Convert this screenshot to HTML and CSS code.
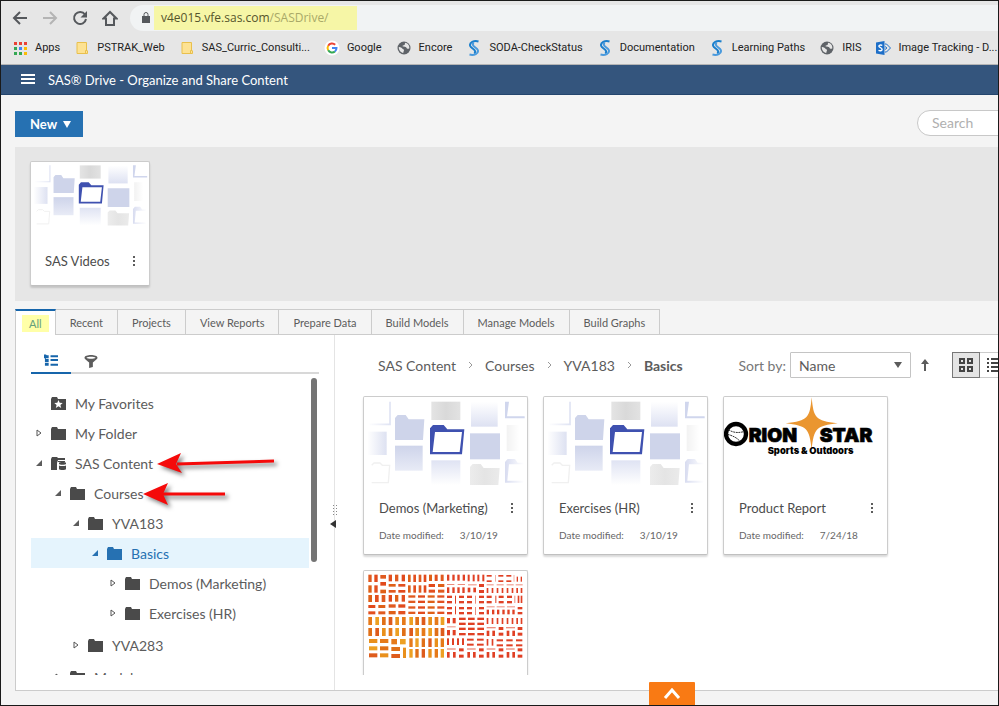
FILE: index.html
```html
<!DOCTYPE html>
<html lang="en">

<head>
    <meta charset="UTF-8">
    <meta name="viewport" content="width=device-width, initial-scale=1.0">
    <title>SAS Drive</title>
    <link rel="stylesheet" href="styles.css">
</head>

<body>
    <!-- Shared icons -->
    <svg class="defs" aria-hidden="true">
        <defs>
            <linearGradient id="fade-down" x1="0" y1="0" x2="0" y2="1">
                <stop offset="0" stop-color="#dfe3f3"/><stop offset="1" stop-color="#fff"/>
            </linearGradient>
            <linearGradient id="fade-up" x1="0" y1="0" x2="0" y2="1">
                <stop offset="0" stop-color="#fff"/><stop offset="1" stop-color="#dde1f2"/>
            </linearGradient>
            <linearGradient id="fade-soft" x1="0" y1="0" x2="0" y2="1">
                <stop offset="0" stop-color="#ced4ea"/><stop offset="1" stop-color="#e8ebf6"/>
            </linearGradient>
            <linearGradient id="fade-left">
                <stop offset="0" stop-color="#fff"/><stop offset="1" stop-color="#d5daee"/>
            </linearGradient>
            <linearGradient id="fade-grey">
                <stop offset="0" stop-color="#e4e4e4"/><stop offset=".5" stop-color="#d9d9d9"/><stop offset="1" stop-color="#e2e2e2"/>
            </linearGradient>
            <linearGradient id="fade-grey-right">
                <stop offset="0" stop-color="#f2f2f2"/><stop offset="1" stop-color="#fff"/>
            </linearGradient>
            <linearGradient id="line-left" gradientUnits="userSpaceOnUse" x1="55" y1="0" x2="120" y2="0">
                <stop offset="0" stop-color="#fff"/><stop offset="1" stop-color="#dfe3f3"/>
            </linearGradient>
            <linearGradient id="line-right" gradientUnits="userSpaceOnUse" x1="465" y1="0" x2="522" y2="0">
                <stop offset="0" stop-color="#d8dcf0"/><stop offset="1" stop-color="#fff"/>
            </linearGradient>
        </defs>
        <symbol id="folder" viewBox="0 0 15 13">
            <path d="M0 2 1 0h5l1 2h8v11H0z"/>
        </symbol>
        <symbol id="sas" viewBox="0 0 16 16">
            <path fill="none" stroke="#1b7fcc" stroke-width="2" d="M12.500 1.500C8 .2 3 2.500 4.200 6c.8 2.200 4.600 3 5 5.400.1.800-.4 1.400-1.200 1.600"/>
            <path fill="none" stroke="#4a9add" stroke-width="2" d="M3.500 14.500c4.500 1.300 9.500-1 8.300-4.500C11 7.800 7.200 7 6.800 4.600c-.1-.8.400-1.400 1.200-1.600"/>
        </symbol>
        <symbol id="globe" viewBox="0 0 16 16">
            <circle cx="8" cy="8" r="6.500" fill="#5f6368"/>
            <path fill="#e6e6e6" d="M2.800 7c1.200-.2 3 .6 3.500 1.600.3.900 1.700.6 1.700 1.700 0 .9-.8 1.300-.7 2.700C4.700 12.600 2.600 10 2.800 7zM9 2.800c-.2 1 .2 1.500-.6 2.100-.9.500-2 .2-1.900 1.200.1 1 2.200.6 3.200.8 1.100.3.800 1.600 1.800 1.900.8.200 1.300-.5 1.800-.3C13.700 5.300 11.500 3 9 2.800z"/>
        </symbol>
        <symbol id="bookmark-folder" viewBox="0 0 16 16">
            <path fill="#fde293" stroke="#e9c04c" d="M3 2.500h9.500v7.500l1 1v2.500H3z"/>
            <path fill="none" stroke="#e9c04c" d="M11.500 13v-2.500h1.500"/>
        </symbol>
        <symbol id="closed" viewBox="0 0 6 8">
            <path fill="#fff" stroke="#555" d="M1 1v6l4-3z"/>
        </symbol>
        <symbol id="open" viewBox="0 0 6 6">
            <path d="M0 6h6V0z"/>
        </symbol>
        <symbol id="dots" viewBox="0 0 4 12">
            <path d="M1 1h2v2H1zM1 5h2v2H1zM1 9h2v2H1z"/>
        </symbol>
        <symbol id="folders" viewBox="42 36 489 270">
            <path fill="none" stroke="url(#line-left)" stroke-width="5" d="M120 50v68H58"/>
            <path fill="url(#fade-left)" opacity=".8" d="M52 140h58v70H52z"/>
            <path fill="none" stroke="#f0f0f0" stroke-width="4" d="M65 241l7-7h18l7 7h22l-4 52H65"/>
            <path fill="#ced4ea" d="M135 165V99l8-9h24l9 13h47l-4 62z"/>
            <path fill="url(#fade-soft)" d="M135 182h83v75h-83z"/>
            <path fill="url(#fade-grey)" d="M244 50h87v55h-87z"/>
            <path fill="url(#fade-down)" d="M244 226h87v74h-87z"/>
            <path fill="#3f51b0" fill-rule="evenodd" d="M240 208v-78l9-10h32l11 13h51l-7 75zM255 141l-7 60h81l7-60z"/>
            <path fill="url(#fade-up)" d="M363 50h80v75h-80z"/>
            <path fill="#ced4ea" d="M360 145h90v78h-90z"/>
            <path fill="url(#fade-grey)" opacity=".7" d="M360 300v-54l8-9h24l9 12h48l-4 51z"/>
            <path fill="#d0d6ed" d="M465 50h12l-6 44h53v6h-59z"/>
            <path fill="url(#fade-grey-right)" d="M470 120h38v78h-38z"/>
            <path fill="url(#line-right)" fill-rule="evenodd" d="M465 293v-62l8-9h22l8 11h18v60zM477 238l-5 49h50v-49z"/>
        </symbol>
    </svg>

    <div class="window">
        <div class="browser">
            <div class="nav">
                <button type="button" aria-label="Back">
                    <svg class="nav-icon" viewBox="0 0 16 16"><path d="M15 8H2M8 2 2 8l6 6"/></svg>
                </button>
                <button type="button" class="disabled" aria-label="Forward">
                    <svg class="nav-icon" viewBox="0 0 16 16"><path d="M1 8h13M8 2l6 6-6 6"/></svg>
                </button>
                <button type="button" aria-label="Reload">
                    <svg class="nav-icon" viewBox="0 0 16 16"><path d="M13 4.500A6 6 0 1 0 14 9"/><path class="solid" d="M15 1v6.500H8.500z"/></svg>
                </button>
                <button type="button" aria-label="Home">
                    <svg class="nav-icon" viewBox="0 0 16 16"><path d="M1.500 8.500 8 2l6.500 6.500H12V15H4V8.500z"/></svg>
                </button>
                <div class="address">
                    <svg class="lock" viewBox="0 0 8 11"><path d="M0 4h8v7H0z"/><path class="shackle" d="M2 4.500V2.500a2 2 0 0 1 4 0v2"/></svg>
                    <div class="url" role="textbox" aria-label="Address" tabindex="0">v4e015.vfe.sas.com<span>/SASDrive/</span></div>
                </div>
            </div>
            <div class="bookmarks">
                <a href="#">
                    <svg viewBox="0 0 16 16"><path fill="#e94235" d="M2 2h3v3H2zM7 2h3v3H7zM12 2h3v3h-3z"/><path fill="#34a853" d="M2 7h3v3H2zM2 12h3v3H2z"/><path fill="#4285f4" d="M7 7h3v3H7z"/><path fill="#fbbc05" d="M12 7h3v3h-3zM12 12h3v3h-3z"/><path fill="#34a853" d="M7 12h3v3H7z"/></svg>
                    Apps
                </a>
                <a href="#"><svg><use href="#bookmark-folder"/></svg>PSTRAK_Web</a>
                <a href="#"><svg><use href="#bookmark-folder"/></svg>SAS_Curric_Consulti...</a>
                <a href="#">
                    <svg viewBox="0 0 16 16" fill="none" stroke-width="2"><circle cx="8" cy="8" r="7.500" fill="#fff"/><g fill="none"><path stroke="#ea4335" d="M4.200 5.700a4.500 4.500 0 0 1 7-1"/><path stroke="#fbbc05" d="M4.200 5.700a4.500 4.500 0 0 0 0 4.600"/><path stroke="#34a853" d="M4.200 10.300a4.500 4.500 0 0 0 6.700 1.200"/><path stroke="#4285f4" d="M10.900 11.500A4.500 4.500 0 0 0 12.500 8H8"/></g></svg>
                    Google
                </a>
                <a href="#"><svg><use href="#globe"/></svg>Encore</a>
                <a href="#"><svg><use href="#sas"/></svg>SODA-CheckStatus</a>
                <a href="#"><svg><use href="#sas"/></svg>Documentation</a>
                <a href="#"><svg><use href="#sas"/></svg>Learning Paths</a>
                <a href="#"><svg><use href="#globe"/></svg>IRIS</a>
                <a href="#">
                    <svg viewBox="0 0 16 16"><path fill="#1e6fc8" d="M1 2.500 9.500 1v14L1 13.500z"/><path fill="none" stroke="#1e6fc8" d="M10 4h1.500l4 4-4 4H10M10 6.500 12 8l-2 1.500"/><path fill="none" stroke="#fff" stroke-width="1.400" d="M7.300 5.300C5.500 4.700 3.800 5 3.900 6.300c.1 1.500 3.300 1.400 3.200 3.200-.1 1.300-1.900 1.600-3.600.9"/></svg>
                    Image Tracking - D...
                </a>
            </div>
        </div>

        <header class="app-header">
            <button type="button" class="menu" aria-label="Menu"><svg viewBox="0 0 14 11"><path d="M0 0h14v2H0zM0 4h14v2H0zM0 8h14v2H0z"/></svg></button>
            <h1>SAS® Drive - Organize and Share Content</h1>
        </header>

        <div class="toolbar">
            <button type="button" class="new">New <svg viewBox="0 0 8 7"><path d="M0 0h8L4 7z"/></svg></button>
            <input type="search" class="search" placeholder="Search" aria-label="Search">
        </div>

        <section class="quick">
            <article class="card small">
                <svg class="thumb"><use href="#folders"/></svg>
                <div class="card-title"><h2>SAS Videos</h2><button type="button" aria-label="More"><svg><use href="#dots"/></svg></button></div>
            </article>
        </section>

        <nav class="tabs">
            <button type="button" class="active"><mark>All</mark></button>
            <button type="button">Recent</button>
            <button type="button">Projects</button>
            <button type="button">View Reports</button>
            <button type="button">Prepare Data</button>
            <button type="button">Build Models</button>
            <button type="button">Manage Models</button>
            <button type="button">Build Graphs</button>
        </nav>

        <main class="panel">
            <aside class="side">
                <div class="side-tabs">
                    <button type="button" class="active" aria-label="Folders">
                        <svg viewBox="0 0 15 13"><path d="M0 0h2l1 1h2v3H0zM1 4h1v2H1zM1 5h4v3H1zM1 9h4v3H1zM7 1h8v2H7zM7 5h8v2H7zM7 10h8v2H7z"/></svg>
                    </button>
                    <button type="button" aria-label="Filter">
                        <svg viewBox="0 0 14 14"><path fill-rule="evenodd" d="M0 3c0-4 14-4 14 0 0 1-1 2-5 5v5l-4 1V8C1 5 0 4 0 3zm2 0c2 1.500 8 1.500 10 0-2-1.500-8-1.500-10 0z"/></svg>
                    </button>
                </div>
                <div class="side-body">
                    <ul class="tree">
                        <li><div class="node">
                            <span class="twist"></span>
                            <svg class="icon" viewBox="0 0 15 13"><path d="M0 2 1 0h5l1 2h8v11H0z"/><path fill="#fff" d="m7.500 3 1.200 2.800 3 .2-2.300 1.900.8 3-2.700-1.700-2.700 1.700.8-3L3.300 6l3-.2z"/></svg>
                            My Favorites</div></li>
                        <li><div class="node"><svg class="twist"><use href="#closed"/></svg><svg class="icon"><use href="#folder"/></svg>My Folder</div></li>
                        <li>
                            <div class="node"><svg class="twist"><use href="#open"/></svg>
                                <svg class="icon" viewBox="0 0 15 13"><path d="M0 2 1 0h5l1 1h7v2H7l-1 3v7H0z"/><path d="M7 4h7v1H7zM8 6c0-1.300 7-1.300 7 0v1c0 1-7 1-7 0zM8 8.500c1 .8 6 .8 7 0V12c0 1.300-7 1.300-7 0z"/></svg>
                                <span class="label">SAS Content
                                    <svg class="pointer long" viewBox="0 0 120 26"><path class="shaft" d="M20 13 117 10"/><path d="M0 13 24 2l-5 11 6 9z"/></svg>
                                </span></div>
                            <ul>
                                <li>
                                    <div class="node lvl-1"><svg class="twist"><use href="#open"/></svg><svg class="icon"><use href="#folder"/></svg>
                                        <span class="label">Courses
                                            <svg class="pointer" viewBox="0 0 86 26"><path class="shaft" d="M20 13H82"/><path d="M0 13 25 2l-5 11 5 11z"/></svg>
                                        </span></div>
                                    <ul>
                                        <li>
                                            <div class="node lvl-2"><svg class="twist"><use href="#open"/></svg><svg class="icon"><use href="#folder"/></svg>YVA183</div>
                                            <ul class="leaf">
                                                <li>
                                                    <div class="node lvl-3 selected"><svg class="twist"><use href="#open"/></svg><svg class="icon"><use href="#folder"/></svg>Basics</div>
                                                    <ul>
                                                        <li><div class="node lvl-4"><svg class="twist"><use href="#closed"/></svg><svg class="icon"><use href="#folder"/></svg>Demos (Marketing)</div></li>
                                                        <li><div class="node lvl-4"><svg class="twist"><use href="#closed"/></svg><svg class="icon"><use href="#folder"/></svg>Exercises (HR)</div></li>
                                                    </ul>
                                                </li>
                                            </ul>
                                        </li>
                                        <li class="leaf"><div class="node lvl-2"><svg class="twist"><use href="#closed"/></svg><svg class="icon"><use href="#folder"/></svg>YVA283</div></li>
                                    </ul>
                                </li>
                                <li><div class="node lvl-1"><svg class="twist"><use href="#closed"/></svg><svg class="icon"><use href="#folder"/></svg>Models</div></li>
                            </ul>
                        </li>
                    </ul>
                    <div class="scrollbar"></div>
                </div>
                <button type="button" class="splitter" aria-label="Collapse folders">
                    <svg viewBox="0 0 8 26"><path d="M3 1h1v1H3zM6 1h1v1H6zM3 4h1v1H3zM6 4h1v1H6zM3 7h1v1H3zM6 7h1v1H6zM3 10h1v1H3zM6 10h1v1H6z"/><path class="tri" d="M6 16v8L0 20z"/></svg>
                </button>
            </aside>

            <section class="content">
                <div class="content-bar">
                    <nav class="crumbs">
                        <a href="#">SAS Content</a><svg viewBox="0 0 5 8"><path d="m1 1 3 3-3 3"/></svg>
                        <a href="#">Courses</a><svg viewBox="0 0 5 8"><path d="m1 1 3 3-3 3"/></svg>
                        <a href="#">YVA183</a><svg viewBox="0 0 5 8"><path d="m1 1 3 3-3 3"/></svg>
                        <b>Basics</b>
                    </nav>
                    <label for="sort">Sort by:</label>
                    <div class="select">
                        <select id="sort"><option>Name</option><option>Date modified</option></select>
                        <svg viewBox="0 0 8 6"><path d="M0 0h8L4 6z"/></svg>
                    </div>
                    <button type="button" class="order" aria-label="Ascending"><svg viewBox="0 0 8 12"><path d="M4 0l4 5H5v7H3V5H0z"/></svg></button>
                    <div class="views">
                        <button type="button" class="active" aria-label="Tiles"><svg viewBox="0 0 14 14"><path d="M1 1h4v4H1zM9 1h4v4H9zM1 9h4v4H1zM9 9h4v4H9z"/></svg></button>
                        <button type="button" aria-label="List"><svg class="list" viewBox="0 0 14 14"><path d="M0 0h2v2H0zM4 0h10v2H4zM0 4h2v2H0zM4 4h10v2H4zM0 8h2v2H0zM4 8h10v2H4zM0 12h2v2H0zM4 12h10v2H4z"/></svg></button>
                    </div>
                </div>
                <div class="cards">
                    <article class="card">
                        <svg class="thumb"><use href="#folders"/></svg>
                        <div class="card-title"><h2>Demos (Marketing)</h2><button type="button" aria-label="More"><svg><use href="#dots"/></svg></button></div>
                        <p><span>Date modified:</span><span>3/10/19</span></p>
                    </article>
                    <article class="card">
                        <svg class="thumb"><use href="#folders"/></svg>
                        <div class="card-title"><h2>Exercises (HR)</h2><button type="button" aria-label="More"><svg><use href="#dots"/></svg></button></div>
                        <p><span>Date modified:</span><span>3/10/19</span></p>
                    </article>
                    <article class="card">
                        <svg class="thumb" viewBox="27 21 489 270">
                            <path fill="#ea9630" d="M290 22c6 62 10 70 78 78-64 8-71 14-78 80-7-66-14-72-78-80 68-8 72-16 78-78z"/>
                            <circle cx="63" cy="132" r="30" fill="#fff" stroke="#000" stroke-width="13"/>
                            <path class="stitch" d="M40 119c16 10 30 10 46 6M38 133c14 4 28 10 37 21"/>
                            <text class="logo" x="101" y="156">RION</text>
                            <text class="logo" x="314" y="156">STAR</text>
                            <text class="logo-sub" x="158" y="191">Sports &amp; Outdoors</text>
                        </svg>
                        <div class="card-title"><h2>Product Report</h2><button type="button" aria-label="More"><svg><use href="#dots"/></svg></button></div>
                        <p><span>Date modified:</span><span>7/24/18</span></p>
                    </article>
                    <article class="card">
                        <svg class="thumb" id="treemap" viewBox="42 36 489 270"></svg>
                        <div class="card-title"></div>
                        <p></p>
                    </article>
                </div>
            </section>
        </main>
        <button type="button" class="expand" aria-label="Expand"><svg viewBox="0 0 18 12"><path d="m2 10 7-8 7 8"/></svg></button>
    </div>
    <script src="script.js"></script>
</body>

</html>
```
FILE: styles.css
```css
* {
    box-sizing: border-box;
}
body {
    margin: 0;
    font-family: Lato, sans-serif;
    font-size: 14px;
    color: #5c5c5c;
}
button {
    padding: 0;
    border: none;
    background: none;
    font: inherit;
    color: inherit;
    cursor: pointer;
}
button svg {
    display: block;
}
a {
    color: inherit;
    text-decoration: none;
}
ul {
    margin: 0;
    padding: 0;
    list-style: none;
}
svg {
    fill: currentColor;
    flex-shrink: 0;
}
.defs {
    position: absolute;
    width: 0;
    height: 0;
}
.window {
    position: relative;
    display: flex;
    flex-direction: column;
    height: 100vh;
    border: 1px solid #1a1a1a;
    background: #f4f4f4;
    overflow: hidden;
}

/* Browser bars */
.browser {
    background: #e6e6e6;
    border-bottom: 1px solid #b5b5b5;
    font-family: Roboto, sans-serif;
    font-size: 11px;
    color: #222;
}
.nav {
    display: flex;
    align-items: center;
    gap: 14px;
    height: 30px;
    padding: 3px 0 0 11px;
    color: #55585c;
}
.nav-icon {
    width: 16px;
    height: 16px;
    fill: none;
    stroke: currentColor;
    stroke-width: 2;
}
.nav-icon .solid {
    fill: currentColor;
    stroke: none;
}
.disabled {
    color: #b4b4b4;
}
.address {
    flex: 1;
    display: flex;
    align-items: center;
    gap: 4px;
    height: 26px;
    margin: 0 -20px 0 -2px;
    padding-left: 12px;
    border-radius: 13px;
    background: #f1f3f4;
}
.lock {
    width: 8px;
    height: 11px;
}
.shackle {
    fill: none;
    stroke: currentColor;
}
.url {
    height: 24px;
    padding: 0 28px 0 7px;
    background: #f6f6a6;
    font-family: "Open Sans", sans-serif;
    font-size: 12px;
    line-height: 24px;
    color: #55552c;
}
.url span {
    color: #a9a968;
}
.bookmarks {
    display: flex;
    align-items: center;
    gap: 14px;
    height: 33px;
    padding-left: 11px;
    overflow: hidden;
    white-space: nowrap;
}
.bookmarks a {
    display: flex;
    align-items: center;
    gap: 7px;
}
.bookmarks svg {
    width: 16px;
    height: 16px;
}

/* Application header */
.app-header {
    display: flex;
    align-items: center;
    gap: 13px;
    height: 30px;
    padding-left: 20px;
    background: #34557d;
    border-bottom: 1px solid #24456d;
    color: #fff;
}
.app-header h1 {
    margin: 0;
    font-size: 13px;
    font-weight: 400;
}
.menu svg {
    width: 14px;
    height: 11px;
}
.toolbar {
    display: flex;
    justify-content: space-between;
    align-items: center;
    height: 52px;
    padding-left: 14px;
    overflow: hidden;
}
.new {
    display: flex;
    align-items: center;
    gap: 6px;
    height: 26px;
    margin-top: 6px;
    padding: 0 12px 0 15px;
    background: #2671b2;
    font-size: 13px;
    font-weight: 700;
    color: #fff;
}
.new svg {
    width: 8px;
    height: 7px;
}
.search {
    flex-shrink: 0;
    width: 200px;
    height: 26px;
    margin: 3px -119px 0 0;
    padding: 0 14px;
    border: 1px solid #c8c8c8;
    border-radius: 13px;
    background: #fff;
    font: inherit;
}
.search::placeholder {
    color: #b0b0b0;
}
.quick {
    margin-left: 14px;
    padding: 14px 15px 15px;
    background: #e6e6e6;
}

/* Cards */
.card {
    width: 165px;
    height: 159px;
    border: 1px solid #ccc;
    border-bottom-color: #c0c0c0;
    border-radius: 2px;
    background: #fff;
    box-shadow: 0 2px 2px rgba(0, 0, 0, 0.15);
}
.card.small {
    width: 120px;
    height: 125px;
}
.thumb {
    display: block;
    width: 100%;
    height: 90px;
}
.small .thumb {
    height: 65px;
}
.card-title {
    display: flex;
    justify-content: space-between;
    align-items: center;
    height: 42px;
    padding: 0 13px 0 15px;
}
.small .card-title {
    height: 68px;
    padding-left: 14px;
}
.card h2 {
    margin: 0;
    font-size: 13px;
    font-weight: 400;
    color: #4c4c4c;
    white-space: nowrap;
}
.card-title svg {
    width: 4px;
    height: 12px;
}
.card p {
    display: flex;
    gap: 16px;
    margin: 0 15px;
    font-size: 10px;
    line-height: 12px;
    color: #666;
}
.logo {
    fill: #000;
    stroke: #000;
    stroke-width: 2;
    font-family: Inter, sans-serif;
    font-size: 58px;
    font-weight: 900;
}
.logo-sub {
    fill: #000;
    font-family: Inter, sans-serif;
    font-size: 28px;
    font-weight: 900;
}
.stitch {
    fill: none;
    stroke: #333;
    stroke-width: 3;
    stroke-dasharray: 6 2;
}

/* Tabs */
.tabs {
    display: flex;
    margin: 8px 0 0 14px;
}
.tabs button {
    height: 25px;
    padding: 0 14px;
    border: 1px solid #ccc;
    border-width: 1px 1px 0 0;
    font-size: 11px;
}
.tabs .active {
    position: relative;
    height: 26px;
    margin-bottom: -1px;
    padding: 0 6px;
    border-left-width: 1px;
    border-top: 2px solid #1665ab;
    background: #fff;
}
.tabs mark {
    display: block;
    padding: 2px 7px;
    background: #ffffa8;
    color: #64a07c;
}
.panel {
    flex: 1;
    display: flex;
    min-height: 0;
    margin: 0 0 14px 14px;
    border: 1px solid #ccc;
    border-right: none;
    background: #fff;
}

/* Folder tree */
.side {
    position: relative;
    display: flex;
    flex-direction: column;
    flex-shrink: 0;
    width: 319px;
    padding: 13px 15px 15px;
    border-right: 1px solid #e4e4e4;
}
.side-tabs {
    display: flex;
    border-bottom: 2px solid #d8d8d8;
}
.side-tabs button {
    display: flex;
    justify-content: center;
    align-items: center;
    width: 40px;
    height: 26px;
    margin-bottom: -2px;
}
.side-tabs .active {
    border-bottom: 2px solid #1665ab;
    color: #1665ab;
}
.side-tabs svg {
    width: 14px;
    height: 13px;
}
.side-body {
    flex: 1;
    display: flex;
    min-height: 0;
    padding-top: 4px;
}
.tree {
    flex: 1;
    padding-top: 10px;
    overflow: hidden;
}
.node {
    display: flex;
    align-items: center;
    gap: 9px;
    height: 30px;
    padding-left: 5px;
    white-space: nowrap;
}
.lvl-1 {
    padding-left: 24px;
}
.lvl-2 {
    padding-left: 42px;
}
.lvl-3 {
    padding-left: 61px;
}
.lvl-4 {
    padding-left: 79px;
}
.leaf {
    padding-bottom: 2px;
}
.twist {
    width: 6px;
    height: 8px;
}
.icon {
    width: 15px;
    height: 13px;
    color: #4a4a4a;
}
.selected,
.selected .icon {
    color: #2671b2;
}
.selected {
    background: #e5f4fd;
}
.label {
    position: relative;
}
.pointer {
    position: absolute;
    top: -4px;
    left: 100%;
    width: 86px;
    height: 26px;
    margin-left: -1px;
    overflow: visible;
    fill: #f50a0a;
    filter: drop-shadow(3px 3px 2px rgba(0, 0, 0, 0.5));
}
.pointer.long {
    width: 120px;
    margin-left: 4px;
}
.shaft {
    fill: none;
    stroke: #f50a0a;
    stroke-width: 3;
}
.scrollbar {
    width: 6px;
    height: 184px;
    margin: 0 2px;
    border-radius: 3px;
    background: #747474;
}
.splitter {
    position: absolute;
    top: 169px;
    right: -4px;
}
.splitter svg {
    width: 8px;
    height: 26px;
    fill: #888;
}
.splitter .tri {
    fill: #333;
}

/* Content area */
.content {
    flex: 1;
    display: flex;
    flex-direction: column;
    gap: 18px;
    min-width: 0;
    padding: 17px 0 15px 28px;
    overflow: hidden;
}
.content-bar {
    display: flex;
    align-items: center;
    height: 26px;
    padding-left: 15px;
    white-space: nowrap;
}
.crumbs {
    flex: 1;
    display: flex;
    align-items: center;
    gap: 12px;
}
.crumbs svg {
    width: 5px;
    height: 8px;
    fill: none;
    stroke: #999;
}
.content-bar label {
    margin-right: 4px;
    color: #777;
}
.select {
    position: relative;
}
.select select {
    appearance: none;
    width: 121px;
    height: 26px;
    padding: 0 8px;
    border: 1px solid #c4c4c4;
    border-radius: 1px;
    background: #fff;
    font: inherit;
    color: inherit;
}
.select svg {
    position: absolute;
    top: 10px;
    right: 9px;
    width: 8px;
    height: 6px;
    pointer-events: none;
}
.order {
    margin: 0 23px 0 10px;
}
.order svg {
    width: 8px;
    height: 12px;
}
.views {
    display: flex;
    margin-right: -10px;
}
.views button {
    display: flex;
    justify-content: center;
    align-items: center;
    width: 28px;
    height: 26px;
    border: 1px solid #ccc;
    border-left: none;
}
.views .active {
    border: 1px solid #777;
    background: #e4e4e4;
}
.views svg {
    width: 14px;
    height: 14px;
    fill: none;
    stroke: #444;
    stroke-width: 2;
}
.views .list {
    fill: #444;
    stroke: none;
}
.cards {
    flex: 1;
    display: flex;
    flex-wrap: wrap;
    align-content: flex-start;
    gap: 15px;
    margin-left: -3px;
    padding-left: 3px;
    overflow: hidden;
}
.expand {
    position: absolute;
    bottom: 0;
    left: 65%;
    display: flex;
    justify-content: center;
    align-items: center;
    width: 46px;
    height: 23px;
    border-radius: 1px 1px 0 0;
    background: #f97a14;
}
.expand svg {
    width: 18px;
    height: 12px;
    fill: none;
    stroke: #fff;
    stroke-width: 3;
}
```
FILE: script.js
```js
// Report preview: groups of bars as [x list, y list, width, height, faint]
const groups = [
    [[55, 73], [47, 79], 10, 22],
    [[91], [48, 69, 92], 17, 11],
    [[116, 135, 155], [47], 10, 20],
    [[116, 145], [75, 93], 21, 8],
    [[174, 190, 206, 221], [47, 79], 8, 22],
    [[237, 254, 272], [47], 9, 19],
    [[236, 264], [75, 92], 19, 9],
    [[291, 307, 322, 338], [47], 7, 18],
    [[291, 323], [75], 22, 3, true],
    [[291, 307, 322, 337], [85], 7, 17],
    [[353, 368, 382, 397], [47], 6, 20],
    [[354], [76], 26, 3, true],
    [[353, 370], [86], 8, 14],
    [[387], [75, 93], 15, 9],
    [[410, 445, 469], [48, 64], 15, 5],
    [[435, 491], [48], 2, 20, true],
    [[500, 512], [53], 4, 15],
    [[410, 440, 470, 497], [76], 21, 3, true],
    [[410, 425, 440, 455, 470, 485, 499, 512], [87], 5, 15],

    [[55, 75, 95], [108], 11, 21],
    [[55, 85], [138, 157], 21, 9],
    [[116, 135, 155], [108], 10, 20],
    [[116, 145], [136, 156], 21, 10],
    [[175, 204, 233, 262], [109, 125, 142, 158], 21, 7],
    [[291, 327, 351, 387], [110, 126, 144, 159], 15, 7],
    [[315], [110, 142], 3, 24],
    [[375], [110, 144], 3, 24, true],
    [[410, 446, 471], [110, 126], 15, 7],
    [[436], [110], 3, 22],
    [[493], [110], 3, 22, true],
    [[503, 512], [110], 5, 22],
    [[410, 440, 471], [142], 24, 3, true],
    [[410, 426, 441, 457, 472, 487], [152], 7, 14],
    [[503], [144, 159], 14, 7],

    [[55, 76, 96, 116, 136, 156, 178, 196, 215, 235, 254, 272], [174, 207], 11, 24],
    [[291, 308], [177, 213], 9, 16],
    [[291], [202], 26, 3, true],
    [[327, 354, 382], [176, 191, 206, 222], 20, 7],
    [[410, 425, 440, 455, 470, 485, 499, 512], [177], 5, 18],
    [[410, 468], [204], 27, 4, true],
    [[446, 503], [204, 221], 14, 9],
    [[410, 427, 470, 487], [215], 8, 16],

    [[57, 90], [240, 262, 283], 25, 12],
    [[124, 150], [240], 17, 16],
    [[124], [264, 285], 26, 12],
    [[159], [266], 9, 31],
    [[178, 196, 215, 235, 254, 272], [238, 270], 10, 26],
    [[291, 306, 321, 336], [238], 6, 20],
    [[351, 381], [239, 254], 20, 6],
    [[291, 351, 410, 468], [268], 26, 4, true],
    [[291, 309, 352, 369, 410, 427, 470, 487], [279], 8, 17],
    [[327, 387, 446, 503], [268, 287], 14, 9],
    [[410, 425], [240], 5, 20],
    [[440, 469, 498], [241, 256], 19, 6]
];

const reds = ['#e05a20', '#e14a1c', '#df6018', '#e25020'];
const oranges = ['#e9901c', '#e67a1a', '#eda023', '#e07018', '#de5c1c'];
const treemap = document.getElementById('treemap');
let n = 0;

groups.forEach(function([xs, ys, width, height, faint]) {
    ys.forEach(function(y) {
        xs.forEach(function(x) {
            const bar = document.createElementNS('http://www.w3.org/2000/svg', 'rect');
            const set = x < 285 && y > 170 ? oranges : reds;
            bar.setAttribute('x', x);
            bar.setAttribute('y', y);
            bar.setAttribute('width', width);
            bar.setAttribute('height', height);
            bar.setAttribute('fill', x > 285 ? '#e04024' : set[n % set.length]);
            bar.setAttribute('opacity', faint ? 0.6 : 1);
            treemap.appendChild(bar);
            n++;
        });
    });
});
```
